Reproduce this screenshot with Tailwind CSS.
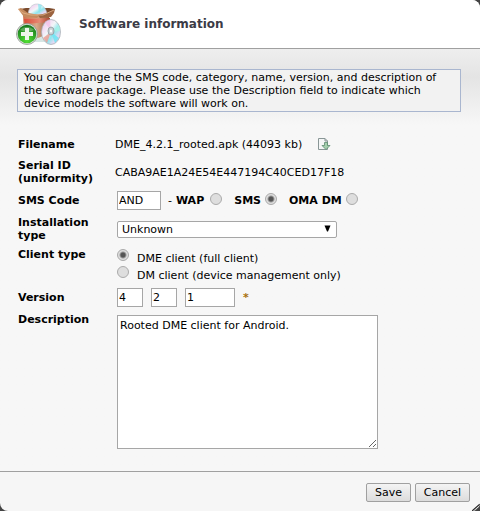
<!DOCTYPE html>
<html lang="en">
<head>
  <meta charset="UTF-8" />
  <meta name="viewport" content="width=device-width, initial-scale=1.0"/>
  <title>Software information</title>
  <script src="https://cdn.jsdelivr.net/npm/@tailwindcss/browser@4"></script>
</head>
<body class="bg-[#444] font-['Verdana','DejaVu_Sans',sans-serif] text-[11px] leading-[13px] text-black">

  <form class="flex min-h-screen flex-col overflow-hidden rounded-lg bg-[#f6f6f6]">
    <!-- Header -->
    <header class="flex h-[49px] items-center border-b border-[#a0a0a0] bg-white pl-4">
      <svg class="h-[44px] w-[46px] shrink-0" viewBox="0 0 46 44" aria-hidden="true">
        <defs>
          <linearGradient id="disc" x1="0" y1="0" x2="1" y2="1">
            <stop offset="0" stop-color="#cfd4d8"/>
            <stop offset=".25" stop-color="#f4dcf4"/>
            <stop offset=".42" stop-color="#f2f6f8"/>
            <stop offset=".6" stop-color="#8ee6ee"/>
            <stop offset=".78" stop-color="#e8d8f4"/>
            <stop offset="1" stop-color="#b5bcc4"/>
          </linearGradient>
          <radialGradient id="plus" cx=".5" cy=".85" r=".8">
            <stop offset="0" stop-color="#52e234"/>
            <stop offset="1" stop-color="#1a7a20"/>
          </radialGradient>
          <linearGradient id="box" x1="0" y1="0" x2="1" y2="0">
            <stop offset="0" stop-color="#d0704f"/>
            <stop offset=".5" stop-color="#dba888"/>
            <stop offset="1" stop-color="#8a5434"/>
          </linearGradient>
          <linearGradient id="band" x1="0" y1="0" x2="1" y2="0">
            <stop offset="0" stop-color="#dc4a38"/>
            <stop offset=".6" stop-color="#e58a74"/>
            <stop offset="1" stop-color="#a8412c"/>
          </linearGradient>
        </defs>
        <!-- open box -->
        <path d="M13 34h20l-4 6H18z" fill="#d7e6e4"/>
        <path d="M4 7l6-1h23l6 1-5 7H9z" fill="#7a4a2c"/>
        <path d="M12 14c0-8 4-12 9-12s10 4 10 12z" fill="url(#disc)" stroke="#b9c3c9" stroke-width=".6"/>
        <path d="M22 2l4 1-3 9z" fill="#7fe4ee" opacity=".7"/>
        <path d="M7 13l26-1 1 19-12 5-14-5z" fill="url(#box)"/>
        <path d="M8 17l26-1v4l-25 2z" fill="url(#band)"/>
        <path d="M2 7l3-1 7 5 12 2-3 3-13-1z" fill="#c48a5e"/>
        <path d="M39 7l-8 4-9 2 2 3 11-1 3-4z" fill="#9c6440"/>
        <path d="M2 7l5 4 8 2h12l11-5" fill="none" stroke="#e2b48c" stroke-width=".8"/>
        <!-- front disc -->
        <ellipse cx="35" cy="30" rx="9.500" ry="12.500" fill="url(#disc)" stroke="#a9b1b7" stroke-width=".8"/>
        <path d="M35 30l-6-10 5-2z" fill="#f3b9e4" opacity=".6"/>
        <path d="M35 30l8-7 1 6z" fill="#a3f0e8"/>
        <path d="M35 30l-8 6 4 5z" fill="#f0968a" opacity=".75"/>
        <path d="M35 30l4 11 4-5z" fill="#66e6f4" opacity=".8"/>
        <ellipse cx="35" cy="29" rx="3" ry="4" fill="#c9d2d6" stroke="#8f989f" stroke-width=".8"/>
        <ellipse cx="35" cy="29" rx="1" ry="1.500" fill="#fff"/>
        <!-- add badge -->
        <circle cx="11" cy="32" r="10.500" fill="#dde3dd" stroke="#8d958d" stroke-width=".8"/>
        <circle cx="11" cy="32" r="9.300" fill="url(#plus)"/>
        <path d="M4 28a9 8 0 0 1 14 0q-7 3-14 0z" fill="#fff" opacity=".25"/>
        <path d="M9 26h4v4h4v4h-4v4H9v-4H5v-4h4z" fill="#eef5ec"/>
      </svg>
      <h1 class="pl-[17px] text-[12px] leading-4 font-bold text-[#3b3b46]">Software information</h1>
    </header>

    <main class="flex-1 bg-linear-to-b from-[#eeeeee] via-[#e4e4e4] via-[28px] to-[#f7f7f7] to-[76px] px-[17px] pt-5 pb-[22px]">
      <p class="mr-0.5 border border-[#a9b6cf] bg-[#f2f2f2] py-px pr-4 pl-1.5">
        You can change the SMS code, category, name, version, and description of the software package. Please use the Description field to indicate which device models the software will work on.
      </p>

      <!-- Package fields -->
      <div class="mt-[23px] flex flex-col gap-1.5 pl-px">
        <div class="grid h-[18px] grid-cols-[97px_1fr] items-center">
          <span class="font-bold">Filename</span>
          <span class="flex items-center gap-4">DME_4.2.1_rooted.apk (44093 kb)
            <a href="#" aria-label="Download">
              <svg class="h-[13px] w-[13px]" viewBox="0 0 13 13">
                <path d="M.5.5H7L9.500 3v8.500h-9z" fill="#f4f6f6" stroke="#899696"/>
                <path d="M7 .5V3h2.500" fill="none" stroke="#899696"/>
                <path d="M6.500 4.500h3v3h2.500l-4 4-4-4h2.500z" fill="#a4cfad" stroke="#5c8c70" stroke-width=".8"/>
              </svg>
            </a>
          </span>
        </div>

        <div class="grid grid-cols-[97px_1fr] items-center">
          <span class="font-bold">Serial ID<br>(uniformity)</span>
          <span>CABA9AE1A24E54E447194C40CED17F18</span>
        </div>

        <div class="grid grid-cols-[99px_1fr] items-center">
          <label for="smsCode" class="font-bold">SMS Code</label>
          <div class="flex items-center">
            <input type="text" id="smsCode" value="AND" class="h-[19px] w-11 border border-[#a6a6a6] bg-white px-px"/>
            <span class="pr-1 pl-[7px]">-</span>
            <label for="wap" class="font-bold">WAP</label>
            <input type="radio" id="wap" name="smsType" class="mb-1 ml-1.5 h-3 w-3 appearance-none rounded-full border border-[#ababab] bg-[#dedede]"/>
            <label for="sms" class="ml-3 font-bold">SMS</label>
            <input type="radio" id="sms" name="smsType" checked class="mb-1 ml-1 h-3 w-3 appearance-none rounded-full border border-[#ababab] bg-[#dedede] checked:bg-[radial-gradient(circle,#555_2px,#dedede_4px)]"/>
            <label for="oma" class="ml-3 font-bold">OMA DM</label>
            <input type="radio" id="oma" name="smsType" class="mb-1 ml-1 h-3 w-3 appearance-none rounded-full border border-[#ababab] bg-[#dedede]"/>
          </div>
        </div>

        <div class="grid grid-cols-[99px_1fr] items-center">
          <label for="installType" class="font-bold">Installation<br>type</label>
          <div class="relative w-[220px]">
            <select id="installType" class="block h-[17px] w-full appearance-none rounded-xs border border-[#a6a6a6] bg-white pl-1">
              <option>Unknown</option>
            </select>
            <svg class="pointer-events-none absolute top-1 right-1.5 h-[7px] w-[7px]" viewBox="0 0 7 7"><path d="M.5.5h6L4 6.500H3z"/></svg>
          </div>
        </div>

        <div class="grid grid-cols-[99px_1fr]" role="radiogroup" aria-labelledby="clientType">
          <span id="clientType" class="font-bold">Client type</span>
          <div class="flex flex-col">
            <label class="flex h-[17px] items-end gap-2">
              <input type="radio" name="client" checked class="mb-1 h-3 w-3 appearance-none rounded-full border border-[#ababab] bg-[#dedede] checked:bg-[radial-gradient(circle,#555_2px,#dedede_4px)]"/>
              DME client (full client)
            </label>
            <label class="flex h-[17px] items-end gap-2">
              <input type="radio" name="client" class="mb-1 h-3 w-3 appearance-none rounded-full border border-[#ababab] bg-[#dedede]"/>
              DM client (device management only)
            </label>
          </div>
        </div>

        <div class="grid grid-cols-[99px_1fr] items-center">
          <label for="major" class="font-bold">Version</label>
          <div class="flex items-center gap-2">
            <input type="text" id="major" value="4" class="h-[19px] w-[26px] border border-[#a6a6a6] bg-white px-px"/>
            <input type="text" value="2" aria-label="Minor version" class="h-[19px] w-[26px] border border-[#a6a6a6] bg-white px-px"/>
            <input type="text" value="1" aria-label="Build" class="h-[19px] w-[50px] border border-[#a6a6a6] bg-white px-px"/>
            <span class="font-bold text-[#a8700c]">*</span>
          </div>
        </div>

        <div class="grid grid-cols-[99px_1fr]">
          <label for="description" class="font-bold">Description</label>
          <textarea id="description" class="mt-0.5 h-[134px] w-[261px] border border-[#a6a6a6] bg-white px-0.5 pt-[3px]">Rooted DME client for Android.</textarea>
        </div>
      </div>
    </main>

    <footer class="relative flex h-10 items-center justify-end gap-1 border-t border-[#a0a0a0] pt-0.5 pr-2.5">
      <button type="submit" class="h-[19px] w-[45px] rounded-xs border border-[#a0a0a0] bg-linear-to-b from-[#f4f4f4] to-[#dcdcdc]">Save</button>
      <button type="button" class="h-[19px] w-[55px] rounded-xs border border-[#a0a0a0] bg-linear-to-b from-[#f4f4f4] to-[#dcdcdc]">Cancel</button>
      <svg class="absolute right-0 bottom-0 h-[7px] w-2" viewBox="0 0 8 7"><path d="M0 7l8-7M3 7l5-4M6 7l2-2" stroke="#222" stroke-width="1.200"/></svg>
    </footer>
  </form>

</body>
</html>
